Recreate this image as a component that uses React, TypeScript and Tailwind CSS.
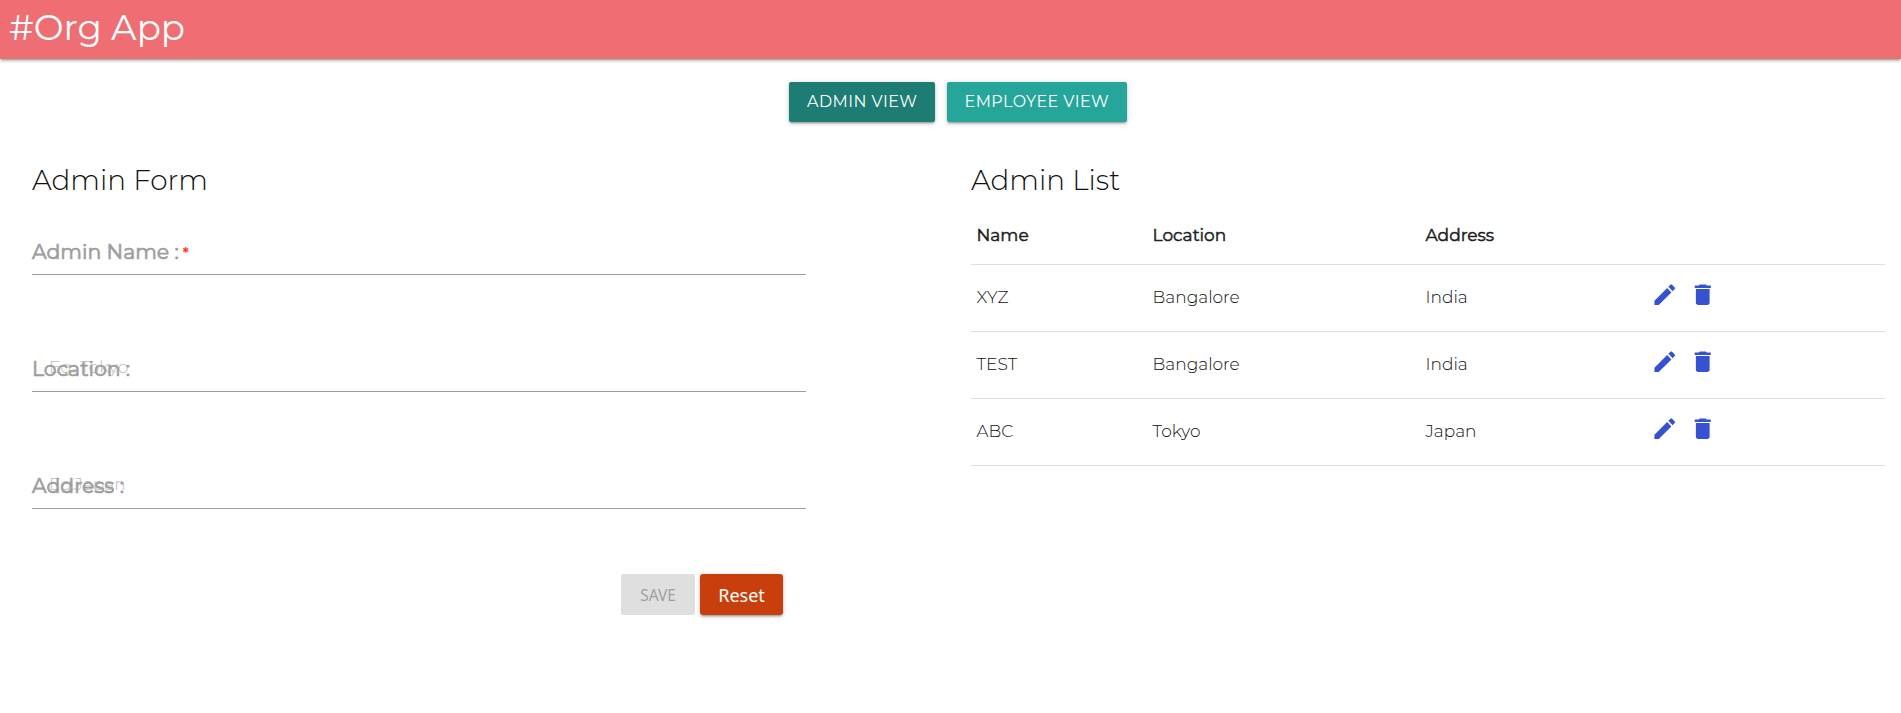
import type { ReactNode } from "react";
import { MdDelete, MdEdit } from "react-icons/md";
import { clsx } from "clsx";

const raised =
  "shadow-[0_2px_2px_0_rgba(0,0,0,0.14),0_3px_1px_-2px_rgba(0,0,0,0.12),0_1px_5px_0_rgba(0,0,0,0.2)]";

const widths = ["w-[176px]", "w-[273px]", "w-[225px]"];

const columns = ["Name", "Location", "Address"];

const admins = [
  ["XYZ", "Bangalore", "India"],
  ["TEST", "Bangalore", "India"],
  ["ABC", "Tokyo", "Japan"],
];

function Heading({ children }: { children: ReactNode }) {
  return <h2 className="h-10 text-[27.9px] leading-10 font-light text-[#111111]">{children}</h2>;
}

function Field({
  label,
  height,
  placeholder,
  placeholderSpacing,
  required,
}: {
  label: string;
  height: string;
  placeholder?: string;
  placeholderSpacing?: string;
  required?: boolean;
}) {
  return (
    <div className={clsx("relative flex items-end border-b border-[#9e9e9e] pb-[2px]", height)}>
      {placeholder && (
        <span
          className={clsx(
            "absolute bottom-[4px] left-[17px] text-[17px] leading-10 font-light text-[#bdbdbd]",
            placeholderSpacing,
          )}
        >
          {placeholder}
        </span>
      )}
      <label className="relative flex h-10 text-[20.4px] leading-10 text-[#9e9e9e]">
        <span className="[-webkit-text-stroke:0.7px_#9e9e9e]">{label}</span>
        {required && <span className="ml-[4px] text-[13.6px] leading-[42px] font-bold text-[#ff3b3b]">*</span>}
      </label>
    </div>
  );
}

function Columns({ cells }: { cells: string[] }) {
  return (
    <>
      {cells.map((cell, i) => (
        <div key={i} className={widths[i]}>
          {cell}
        </div>
      ))}
    </>
  );
}

export default function App() {
  return (
    <div className="h-[713px] overflow-hidden bg-white font-['Montserrat','Inter',sans-serif] text-[#212121]">
      <header className={clsx("h-[59px] bg-[#ee6e73] pl-[9px]", raised)}>
        <h1 className="text-[35.6px] leading-[55px] text-white">#Org App</h1>
      </header>

      <nav className="flex justify-center gap-3 pt-[23px] pl-[15px] text-[15.9px] tracking-[0.5px] text-white">
        <button className={clsx("h-10 w-[146px] rounded-[2px] bg-[#1d7d74] pl-[18px] text-left leading-10", raised)}>
          ADMIN VIEW
        </button>
        <button className={clsx("h-10 w-[180px] rounded-[2px] bg-[#26a69a] pl-[17.5px] text-left leading-10", raised)}>
          EMPLOYEE VIEW
        </button>
      </nav>

      <main className="flex justify-between pt-[38px] pr-4 pl-8">
        <section className="w-[774px]">
          <Heading>Admin Form</Heading>
          <Field label="Admin Name :" height="h-[75px]" required />
          <Field label="Location :" height="h-[117px]" placeholder="Eg. Tokyo" placeholderSpacing="tracking-[0.1px]" />
          <Field
            label="Address :"
            height="h-[117px]"
            placeholder="Eg. Japan"
            placeholderSpacing="[word-spacing:-5px]"
          />
          <div className="mt-[65px] flex justify-end gap-[5px] pr-[23px] font-['Noto_Sans',sans-serif]">
            <button className="h-[41px] w-[74px] rounded-[2px] bg-[#dfdfdf] pt-[2px] text-[15.5px] text-[#9f9f9f]">
              SAVE
            </button>
            <button className={clsx("h-[41px] w-[83px] rounded-[3px] bg-[#c83f0d] pt-[2px] text-[18px] text-white", raised)}>
              Reset
            </button>
          </div>
        </section>

        <section className="w-[914px]">
          <Heading>Admin List</Heading>
          <div className="flex h-[65px] items-center border-b border-[#e0e0e0] pt-[8px] pl-[5.5px] text-[17px] [-webkit-text-stroke:0.5px_#212121]">
            <Columns cells={columns} />
          </div>
          {admins.map((cells) => (
            <div
              key={cells[0]}
              className="flex h-[67px] items-center border-b border-[#e0e0e0] pl-[5.5px] text-[17px] font-light text-[#111111]"
            >
              <Columns cells={cells} />
              <div className="flex gap-[11px] pb-[7px] text-[27.5px] text-[#3652d0]">
                <MdEdit />
                <MdDelete />
              </div>
            </div>
          ))}
        </section>
      </main>
    </div>
  );
}
